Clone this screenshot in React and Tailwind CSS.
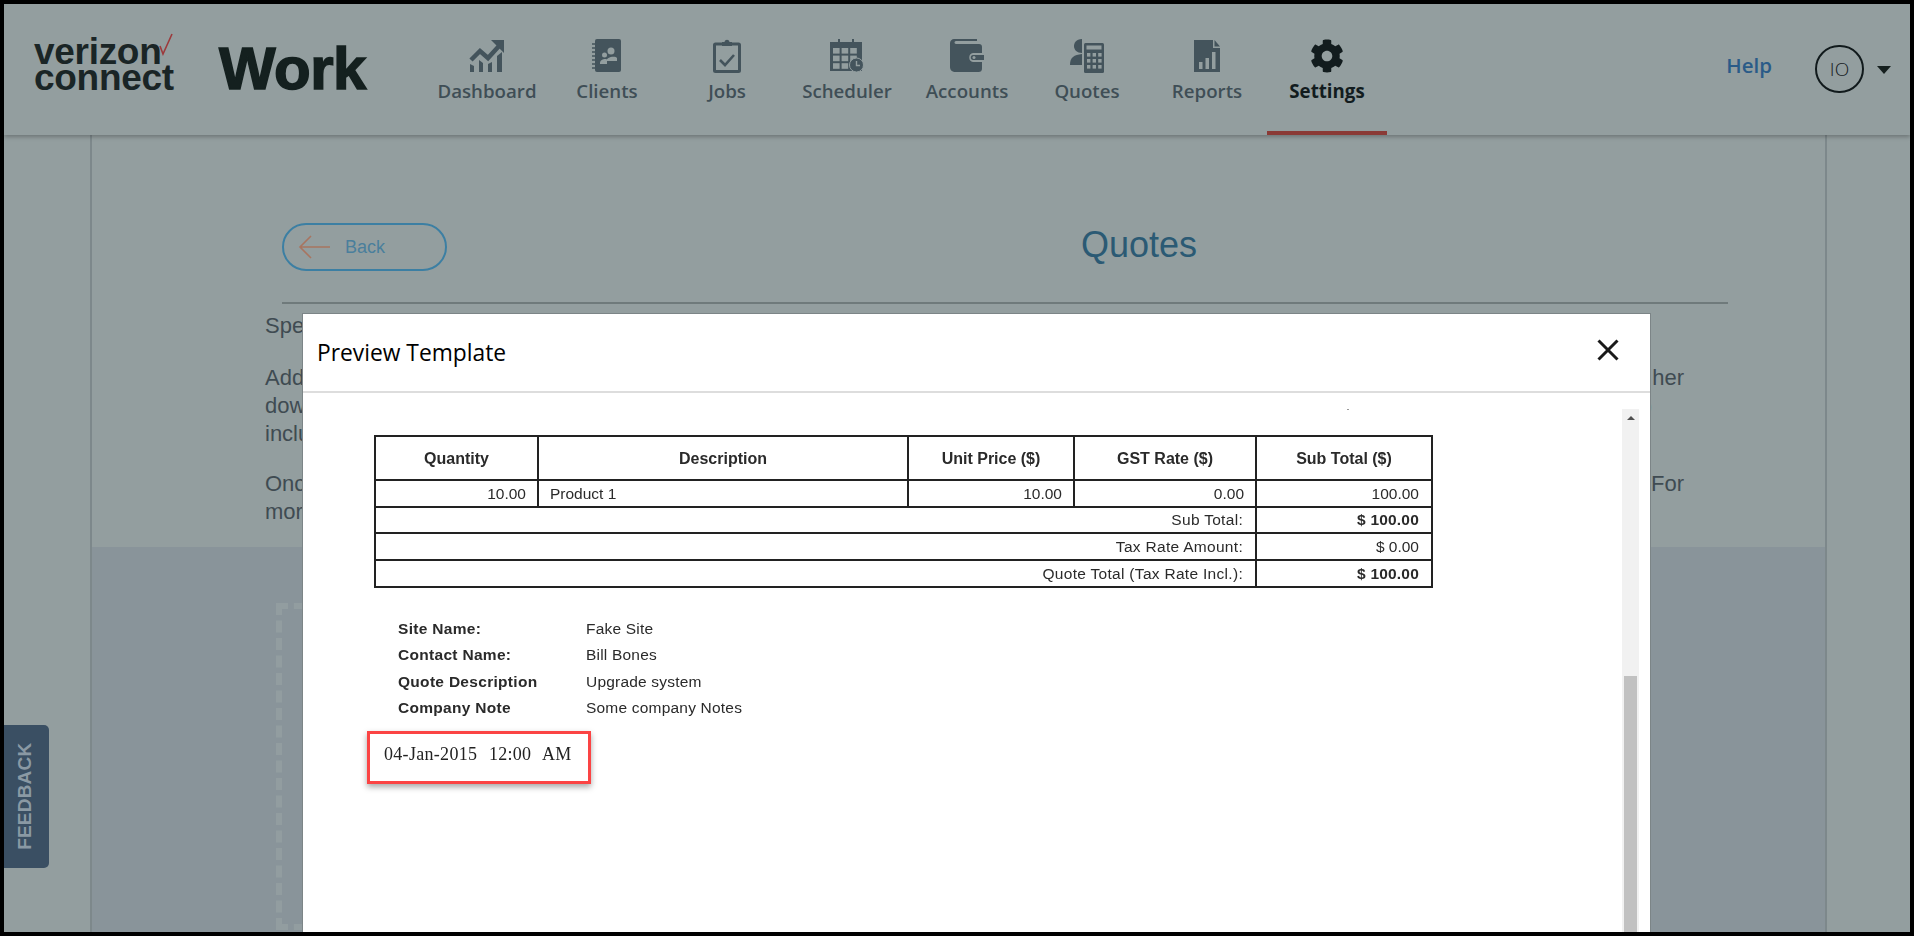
import React from "react";
import { FaCog } from "react-icons/fa";

const ICON = "#44545c";
const BG = "#939e9f";

function DashboardIcon() {
  return (
    <svg width="36" height="34" viewBox="0 0 36 34">
      <path d="M2 21 L11 12 L19 19 L30 7" fill="none" stroke={ICON} strokeWidth="4.5" />
      <path d="M22 1 H35 V14 Z" fill={ICON} />
      <path d="M1 25 L5 27 V33 H1 Z M10 21 L14 24 V33 H10 Z M19 25 L23 23 V33 H19 Z M28 17 L33 13 V33 H28 Z" fill={ICON} />
    </svg>
  );
}

function ClientsIcon() {
  return (
    <svg width="30" height="34" viewBox="0 0 30 34">
      <rect x="3" y="0" width="26" height="33" rx="2" fill={ICON} />
      <path d="M0 5h4M0 9h4M0 13h4M0 17h4M0 21h4M0 25h4M0 29h4" stroke={ICON} strokeWidth="1.5" />
      <circle cx="19" cy="12" r="3.5" fill={BG} />
      <path d="M14 23 C14 17 24 17 25 19 V22 H14 Z" fill={BG} />
      <circle cx="12.5" cy="16" r="2.5" fill={BG} />
      <path d="M8 24 C8 20 15 19 15 21 V25 H8 Z" fill={BG} />
    </svg>
  );
}

function JobsIcon() {
  return (
    <svg width="28" height="34" viewBox="0 0 28 34">
      <rect x="1.5" y="5" width="25" height="27.5" rx="1" fill="none" stroke={ICON} strokeWidth="3" />
      <path d="M9 7 V3 H11.5 C12 0 16 0 16.5 3 H19 V7 Z" fill={ICON} />
      <path d="M7 21 L12 26 L21 16" fill="none" stroke={ICON} strokeWidth="2.6" />
    </svg>
  );
}

function SchedulerIcon() {
  const cells = [];
  [0, 1, 2].forEach((c) =>
    [0, 1, 2].forEach((r) => {
      if (!(c === 2 && r === 2)) {
        cells.push(<rect key={c + "-" + r} x={3 + c * 8.6} y={9 + r * 7.6} width="6.6" height="5.6" fill={BG} />);
      }
    })
  );
  return (
    <svg width="34" height="34" viewBox="0 0 34 34">
      <rect x="0" y="3" width="32" height="29" fill={ICON} />
      <rect x="8" y="0" width="2" height="6" fill={ICON} />
      <rect x="22" y="0" width="2" height="6" fill={ICON} />
      {cells}
      <circle cx="26.5" cy="26" r="7" fill={ICON} stroke={BG} strokeWidth="1" />
      <path d="M26.5 22 V26.5 H30" fill="none" stroke={BG} strokeWidth="1.4" />
    </svg>
  );
}

function AccountsIcon() {
  return (
    <svg width="34" height="34" viewBox="0 0 34 34">
      <path d="M4 0 H27 V2 H6 C4 2 4 5 6 5 H29 C31 5 32 6 32 8 V14 H23 C18 14 18 23 23 23 H32 V29 C32 32 31 33 28 33 H6 C2 33 0 31 0 28 V4 C0 2 2 0 4 0 Z" fill={ICON} />
      <path d="M23 16 H34 V21 H23 C20 21 20 16 23 16 Z" fill={ICON} />
      <circle cx="24" cy="18.5" r="1.5" fill={BG} />
    </svg>
  );
}

function QuotesIcon() {
  const keys = [];
  [0, 1, 2].forEach((c) =>
    [0, 1, 2].forEach((r) => {
      keys.push(<rect key={c + "-" + r} x={17 + c * 5.6} y={14 + r * 6} width="3.4" height="3.6" fill={BG} />);
    })
  );
  return (
    <svg width="34" height="34" viewBox="0 0 34 34">
      <path d="M12 0 C6 0 4 4 4 7 C4 11 7 14 12 14 Z" fill={ICON} />
      <path d="M12 15 C4 16 0 18 0 26 H12 Z" fill={ICON} />
      <rect x="14" y="4" width="20" height="30" rx="1.5" fill={ICON} />
      <rect x="16.5" y="6.5" width="15" height="4" fill={BG} />
      {keys}
    </svg>
  );
}

function ReportsIcon() {
  return (
    <svg width="28" height="34" viewBox="0 0 28 34">
      <path d="M1 1 H20 V9 H27 V33 H1 Z" fill={ICON} />
      <path d="M21.5 1 L27 7.5 H21.5 Z" fill={ICON} />
      <rect x="6" y="23" width="3.5" height="7" fill={BG} />
      <rect x="12.5" y="19" width="3.5" height="11" fill={BG} />
      <rect x="19" y="13" width="3.5" height="17" fill={BG} />
    </svg>
  );
}

const navItems = [
  { label: "Dashboard", icon: <DashboardIcon /> },
  { label: "Clients", icon: <ClientsIcon /> },
  { label: "Jobs", icon: <JobsIcon /> },
  { label: "Scheduler", icon: <SchedulerIcon /> },
  { label: "Accounts", icon: <AccountsIcon /> },
  { label: "Quotes", icon: <QuotesIcon /> },
  { label: "Reports", icon: <ReportsIcon /> },
  { label: "Settings", icon: <FaCog size={34} color="#121c1e" />, active: true },
];

const textRows = [
  { left: "Specify", right: "", cls: "" },
  { left: "Add", right: "her", cls: "mt-[24px]" },
  { left: "download", right: ")", blue: true, cls: "" },
  { left: "include", right: "", cls: "" },
  { left: "Once", right: "For", cls: "mt-[22px]" },
  { left: "more", right: "", cls: "" },
];

const detailRows = [
  ["Site Name:", "Fake Site"],
  ["Contact Name:", "Bill Bones"],
  ["Quote Description", "Upgrade system"],
  ["Company Note", "Some company Notes"],
];

function App() {
  return (
    <div className="relative h-[936px] overflow-hidden border-4 border-black bg-[#939e9f] font-['Liberation_Sans',sans-serif] flex flex-col">
      <header className="relative z-10 flex h-[131px] shrink-0 bg-[#939e9f] shadow-[0_2px_4px_rgba(0,0,0,0.25)]">
        <div className="relative w-[215px] shrink-0 pl-[30px] pt-[35px] text-[37px] leading-[26px] font-bold tracking-[-0.3px] text-[#1a2526]">
          verizon
          <br />
          connect
          <svg className="absolute left-[155px] top-[29px]" width="14" height="23" viewBox="0 0 14 23">
            <path d="M1 13 L4 21 L13 1" fill="none" stroke="#9c3a3c" strokeWidth="1.6" />
          </svg>
        </div>
        <div className="w-[208px] shrink-0 pt-[35px] text-[60px] leading-[60px] font-bold tracking-[-0.5px] text-[#14201f] [-webkit-text-stroke:1.5px_#14201f]">
          Work
        </div>
        <nav className="flex font-['Open_Sans',sans-serif]">
          {navItems.map((item) => (
            <div
              key={item.label}
              className={
                item.active
                  ? "flex w-[120px] flex-col items-center border-b-4 border-[#8a3a36] pt-[35px] font-bold text-[#121c1e]"
                  : "flex w-[120px] flex-col items-center border-b-4 border-transparent pt-[35px] font-semibold text-[#3f4e56]"
              }
            >
              <div className="flex h-[34px] items-center justify-center">{item.icon}</div>
              <div className="mt-[6px] text-[18.7px] leading-[24px]">{item.label}</div>
            </div>
          ))}
        </nav>
        <div className="flex flex-1 items-start justify-end pr-[19px] font-['Open_Sans',sans-serif]">
          <div className="mt-[49px] text-[20.5px] leading-[24px] font-semibold text-[#2a5b88]">Help</div>
          <div className="ml-[43px] mt-[41px] flex h-[48px] w-[49px] items-center justify-center rounded-full border-2 border-[#111a1c] text-[19px] font-light text-[#16201f]">
            IO
          </div>
          <div className="ml-[13px] mt-[62px] h-0 w-0 border-x-[7.5px] border-t-[8px] border-x-transparent border-t-[#16201f]" />
        </div>
      </header>

      <main className="ml-[86px] flex w-[1737px] flex-1 flex-col border-x-2 border-[#7d888b]">
        <section className="h-[412px] shrink-0 bg-[#939e9f] pl-[173px] text-[#3f4b52]">
          <div className="ml-[17px] flex h-[169px] w-[1446px] flex-col justify-end border-b-2 border-[#6f7a7b]">
            <div className="relative mb-[31px] h-[48px]">
              <div className="flex h-[48px] w-[165px] items-center rounded-full border-2 border-[#3c7fa3] pl-[14px]">
                <svg width="34" height="26" viewBox="0 0 34 26">
                  <path d="M32 13 H2 M13 2 L2 13 L13 24" fill="none" stroke="#a87560" strokeWidth="1.6" />
                </svg>
                <span className="ml-[13px] text-[18px] text-[#4a7f9c]">Back</span>
              </div>
              <h1 className="absolute left-[799px] top-0 text-[36px] leading-[44px] text-[#2b5a74]">Quotes</h1>
            </div>
          </div>
          <div className="pt-[8px] text-[22px] leading-[28px]">
            {textRows.map((row) => (
              <div key={row.left} className={"flex w-[1419px] justify-between " + row.cls}>
                <span>{row.left}</span>
                <span className={row.blue ? "mr-[32px] text-[#2a5b88]" : ""}>{row.right}</span>
              </div>
            ))}
          </div>
        </section>
        <section className="flex-1 bg-[#89949a] pl-[184px] pt-[56px]">
          <div className="h-[327px] w-[1300px] border-[6px] border-dashed border-[#929da0]" />
        </section>
      </main>

      <button className="absolute left-0 top-[721px] flex h-[143px] w-[45px] items-center justify-center rounded-r-[5px] bg-[#3a4f63]">
        <span className="-ml-[2px] -rotate-90 text-[19px] font-bold tracking-[0.2px] text-[#8a99a4]">FEEDBACK</span>
      </button>

      <div className="absolute left-[298px] top-[309px] z-20 h-[700px] w-[1349px] border border-[#7c8587] bg-white">
        <div className="flex h-[79px] items-center justify-between border-b-2 border-[#dddddd] pl-[14px] pr-[31px]">
          <h2 className="font-['Open_Sans',sans-serif] text-[22.8px] leading-[30px] text-black">Preview Template</h2>
          <svg width="22" height="22" viewBox="0 0 22 22" className="mb-[5px]">
            <path d="M1.5 1.5 L20.5 20.5 M20.5 1.5 L1.5 20.5" stroke="#1a1a1a" strokeWidth="3" />
          </svg>
        </div>

        <div className="absolute left-[1044px] top-[95px] h-[1px] w-[2px] bg-[#999999]" />
        <div className="absolute left-[1319px] top-[95px] h-[530px] w-[17px] bg-[#f1f1f1]">
          <div className="mx-auto mt-[7px] h-0 w-0 border-x-[4px] border-b-[4px] border-x-transparent border-b-[#505050]" />
          <div className="mx-auto mt-[256px] h-[300px] w-[13px] bg-[#c1c1c1]" />
        </div>

        <div className="pl-[71px] pt-[42px] text-[15.5px] text-[#2a2a2a] blur-[0.3px]">
          <table className="w-[1057px] table-fixed border-collapse border-2 border-[#222222]">
            <colgroup>
              <col className="w-[163px]" />
              <col className="w-[370px]" />
              <col className="w-[166px]" />
              <col className="w-[182px]" />
              <col className="w-[176px]" />
            </colgroup>
            <thead>
              <tr className="h-[44px] text-[16px] font-bold">
                <th className="border-2 border-[#222222] pt-[2px]">Quantity</th>
                <th className="border-2 border-[#222222] pt-[2px]">Description</th>
                <th className="border-2 border-[#222222] pt-[2px]">Unit Price ($)</th>
                <th className="border-2 border-[#222222] pt-[2px]">GST Rate ($)</th>
                <th className="border-2 border-[#222222] pt-[2px]">Sub Total ($)</th>
              </tr>
            </thead>
            <tbody>
              <tr className="h-[27px]">
                <td className="border-2 border-[#222222] pr-[11px] text-right">10.00</td>
                <td className="border-2 border-[#222222] pl-[11px]">Product 1</td>
                <td className="border-2 border-[#222222] pr-[11px] text-right">10.00</td>
                <td className="border-2 border-[#222222] pr-[11px] text-right">0.00</td>
                <td className="border-2 border-[#222222] pr-[12px] text-right">100.00</td>
              </tr>
              <tr className="h-[26px]">
                <td colSpan={4} className="border-2 border-[#222222] pr-[12px] text-right tracking-[0.3px]">Sub Total:</td>
                <td className="border-2 border-[#222222] pr-[12px] text-right font-bold tracking-[0.2px]">$ 100.00</td>
              </tr>
              <tr className="h-[27px]">
                <td colSpan={4} className="border-2 border-[#222222] pr-[12px] text-right tracking-[0.3px]">Tax Rate Amount:</td>
                <td className="border-2 border-[#222222] pr-[12px] text-right">$ 0.00</td>
              </tr>
              <tr className="h-[27px]">
                <td colSpan={4} className="border-2 border-[#222222] pr-[12px] text-right tracking-[0.3px]">Quote Total (Tax Rate Incl.):</td>
                <td className="border-2 border-[#222222] pr-[12px] text-right font-bold tracking-[0.2px]">$ 100.00</td>
              </tr>
            </tbody>
          </table>

          <div className="mt-[27px] pl-[24px]">
            {detailRows.map((row) => (
              <div key={row[0]} className="flex h-[26.5px] items-center">
                <div className="w-[188px] font-bold tracking-[0.3px]">{row[0]}</div>
                <div className="tracking-[0.2px]">{row[1]}</div>
              </div>
            ))}
          </div>

          <div className="-ml-[7px] mt-[10px] h-[53px] w-[224px] border-[3px] border-[#fb4444] pl-[14px] pt-[9px] font-['Liberation_Serif',serif] text-[18px] leading-[22px] tracking-[0.3px] [word-spacing:1px] whitespace-pre text-[#222222] shadow-[0_3px_6px_rgba(0,0,0,0.35)]">
            04-Jan-2015  12:00  AM
          </div>
        </div>
      </div>
    </div>
  );
}

export default App;
